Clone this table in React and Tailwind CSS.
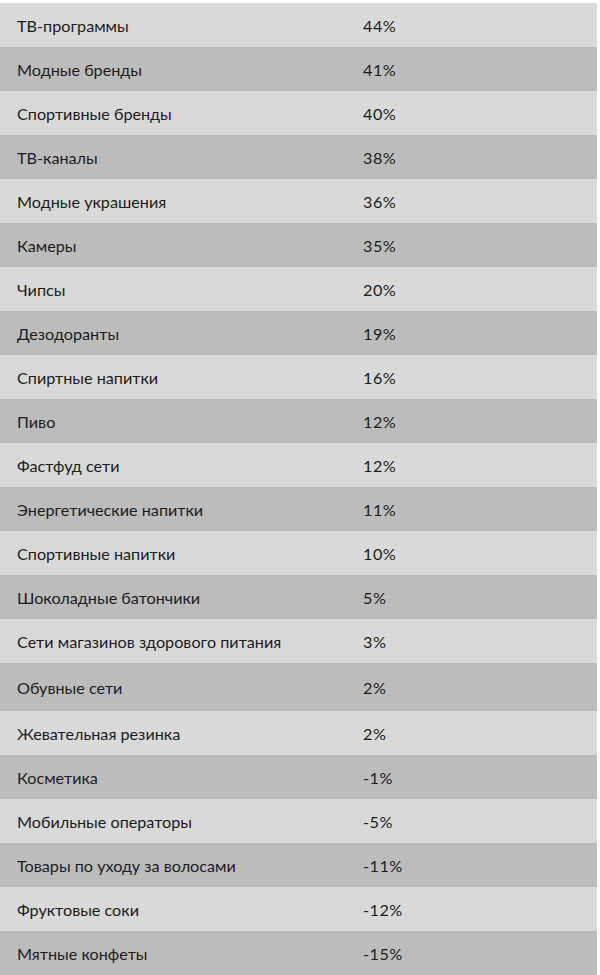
import React from "react";

const rows = [
  ["ТВ-программы", "44%"],
  ["Модные бренды", "41%"],
  ["Спортивные бренды", "40%"],
  ["ТВ-каналы", "38%"],
  ["Модные украшения", "36%"],
  ["Камеры", "35%"],
  ["Чипсы", "20%"],
  ["Дезодоранты", "19%"],
  ["Спиртные напитки", "16%"],
  ["Пиво", "12%"],
  ["Фастфуд сети", "12%"],
  ["Энергетические напитки", "11%"],
  ["Спортивные напитки", "10%"],
  ["Шоколадные батончики", "5%"],
  ["Сети магазинов здорового питания", "3%"],
  ["Обувные сети", "2%"],
  ["Жевательная резинка", "2%"],
  ["Косметика", "-1%"],
  ["Мобильные операторы", "-5%"],
  ["Товары по уходу за волосами", "-11%"],
  ["Фруктовые соки", "-12%"],
  ["Мятные конфеты", "-15%"],
];

export default function App() {
  return (
    <div
      className="w-[600px] h-[975px] bg-white pt-[3px] pr-[3px] text-[#1c1c1c] text-[16.2px]"
      style={{ fontFamily: "Lato, 'Noto Sans', sans-serif" }}
    >
      <div className="flex flex-col">
        {rows.map(([name, val], i) => (
          <div
            key={i}
            className={`flex items-center pl-[17px] pt-[3px] ${i === 15 ? "h-[48px]" : "h-[44px]"} ${
              i % 2 === 0 ? "bg-[#d9d9d9]" : "bg-[#bcbcbc]"
            }`}
          >
            <div className="w-[346px]">{name}</div>
            <div className="tracking-[0.5px]">{val}</div>
          </div>
        ))}
      </div>
    </div>
  );
}
